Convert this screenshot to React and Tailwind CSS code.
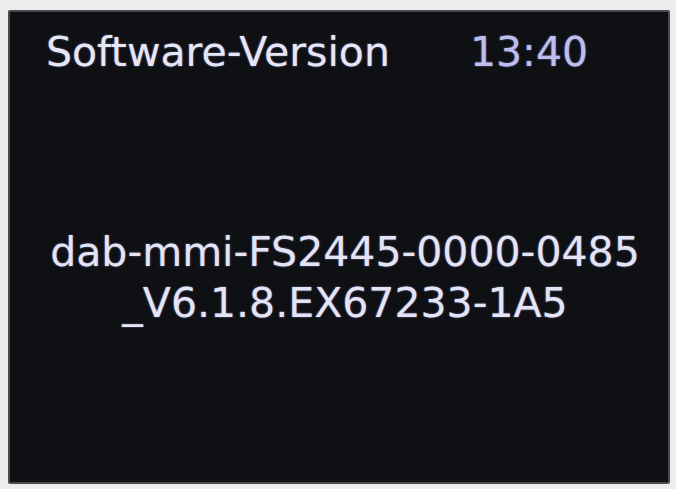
export default function App() {
  return (
    <div className="w-[676px] h-[489px] bg-[#ececec] pt-[10px] pl-[8px] pr-[6px] pb-[5px]" style={{ fontFamily: '"DejaVu Sans", sans-serif' }}>
      <div className="h-full w-full bg-[#0e1014] border-2 border-[#4a4b50] rounded-[2px] flex flex-col [text-shadow:0_0_2px_rgba(190,190,255,0.6)]">
        <div className="flex items-start pt-[16px] pl-[36px] text-[41px] leading-[48px]">
          <span className="text-[#e6e6f6]">Software-Version</span>
          <span className="ml-[80px] text-[#bdbdee]">13:40</span>
        </div>
        <div className="mt-[151px] pl-[12px] text-center text-[41px] leading-[51px] text-[#e4e4f6]">
          <div>dab-mmi-FS2445-0000-0485</div>
          <div>_V6.1.8.EX67233-1A5</div>
        </div>
      </div>
    </div>
  );
}
